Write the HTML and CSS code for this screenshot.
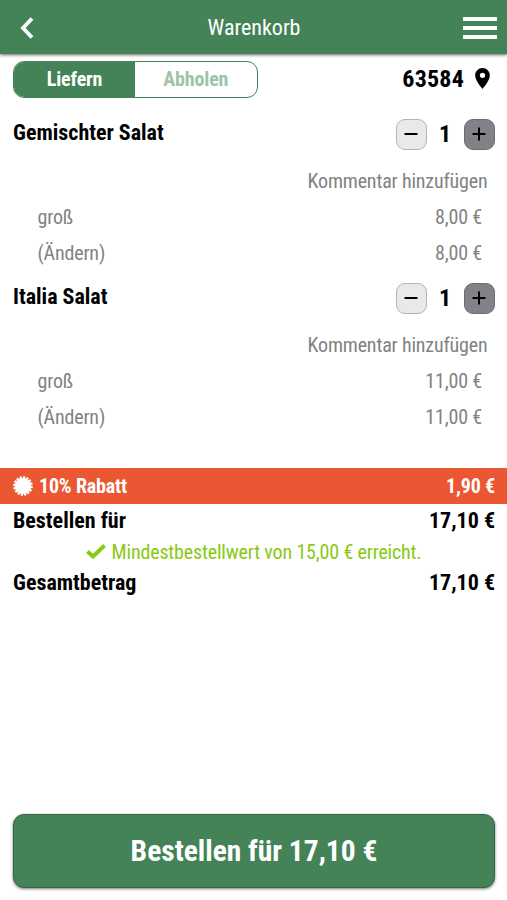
FILE: index.html
```html
<!DOCTYPE html>
<html lang="de">
<head>
	<meta charset="utf-8">
	<title>Warenkorb</title>
	<meta name="viewport" content="width=device-width, initial-scale=1">
	<link rel="stylesheet" href="styles.css">
</head>
<body>

	<header>
		<svg class="back" viewBox="0 0 14 22"><path d="M12 1.5 3 11l9 9.5"/></svg>
		<h1>Warenkorb</h1>
		<div class="menu"><i></i><i></i><i></i></div>
	</header>

	<div class="delivery">
		<div class="toggle">
			<div class="on"><span>Liefern</span></div>
			<div><span>Abholen</span></div>
		</div>
		<div class="zip">
			<span>63584</span>
			<svg class="pin" viewBox="5 2 14 20"><path d="M12 2C8.13 2 5 5.13 5 9c0 5.25 7 13 7 13s7-7.75 7-13c0-3.87-3.13-7-7-7zm0 9.5a2.5 2.5 0 1 1 0-5 2.5 2.5 0 0 1 0 5z"/></svg>
		</div>
	</div>

	<main>
		<section class="item">
			<div class="title">
				<h2>Gemischter Salat</h2>
				<div class="minus"><svg viewBox="0 0 14 14"><path d="M.5 7h13"/></svg></div>
				<div class="count">1</div>
				<div class="plus"><svg viewBox="0 0 14 14"><path d="M.5 7h13M7 .5v13"/></svg></div>
			</div>
			<div class="comment"><span>Kommentar hinzufügen</span></div>
			<div class="option"><span>groß</span><span class="price">8,00 €</span></div>
			<div class="option"><span>(Ändern)</span><span class="price">8,00 €</span></div>
		</section>

		<section class="item">
			<div class="title">
				<h2>Italia Salat</h2>
				<div class="minus"><svg viewBox="0 0 14 14"><path d="M.5 7h13"/></svg></div>
				<div class="count">1</div>
				<div class="plus"><svg viewBox="0 0 14 14"><path d="M.5 7h13M7 .5v13"/></svg></div>
			</div>
			<div class="comment"><span>Kommentar hinzufügen</span></div>
			<div class="option"><span>groß</span><span class="price">11,00 €</span></div>
			<div class="option"><span>(Ändern)</span><span class="price">11,00 €</span></div>
		</section>
	</main>

	<div class="discount">
		<svg class="badge" viewBox="-10 -10 20 20"><circle r="8.1"/><circle class="teeth" r="8.4" pathLength="32"/></svg>
		<span>10% Rabatt</span>
		<span class="price">1,90 €</span>
	</div>

	<div class="sum"><span>Bestellen für</span><span class="price">17,10 €</span></div>
	<div class="minimum">
		<svg class="check" viewBox="0 0 20 15"><path d="M1.5 7.5 7 12.5 18.5 1.5"/></svg>
		<span>Mindestbestellwert von 15,00 € erreicht.</span>
	</div>
	<div class="sum"><span>Gesamtbetrag</span><span class="price">17,10 €</span></div>

	<footer>
		<div class="order"><span>Bestellen für 17,10 €</span></div>
	</footer>

</body>
</html>
```
FILE: styles.css
```css
* { box-sizing: border-box; }

:root {
	--green: #448357;
	--orange: #eb5633;
	--lime: #88c913;
	--gray: #828282;
	--padding: 13px;
}

body {
	margin: 0;
	height: 900px;
	display: flex;
	flex-direction: column;
	overflow: hidden;
	background: #fff;
	color: #000;
	font: 20px "Roboto Condensed", Roboto, sans-serif;
	font-stretch: 75%;
	letter-spacing: -.17px;
	white-space: nowrap;
}

h1, h2 { margin: 0; }

header {
	display: grid;
	grid-template-columns: 34px 1fr 34px;
	align-items: center;
	height: 54px;
	padding: 0 10px 0 20px;
	background: var(--green);
	box-shadow: 0 1px 3px #0009;
	color: #fff;
}
header h1 { padding-right: 9px; font-size: 22px; font-weight: 400; letter-spacing: 0; text-align: center; }

.back { width: 14px; height: 22px; margin-top: 2px; fill: none; stroke: #fff; stroke-width: 3.8; }

.menu { display: grid; gap: 5px; margin-top: 2px; }
.menu i { height: 4px; background: #fff; }

.delivery {
	display: flex;
	justify-content: space-between;
	padding: 7px 17px 0 var(--padding);
}

.toggle {
	display: grid;
	grid-template-columns: 121px 1fr;
	width: 244.5px;
	height: 37px;
	overflow: hidden;
	border: 1px solid var(--green);
	border-radius: 11px;
	color: #9fc3aa;
	font-weight: 700;
	line-height: 35px;
	text-align: center;
}
.toggle .on { background: var(--green); color: #fff; }

.zip { display: flex; align-items: center; gap: 11px; padding-bottom: 2px; font-size: 24px; font-weight: 700; letter-spacing: .2px; }
.pin { width: 15px; height: 21px; }

main { padding-top: 16px; }

.item { height: 164px; color: var(--gray); }

.title { display: flex; align-items: center; height: 40px; padding: 0 12.5px 0 var(--padding); color: #000; }
.title h2 { flex: 1; padding-bottom: 4px; font-size: 22px; font-weight: 700; letter-spacing: 0; }

.minus, .plus {
	display: grid;
	place-items: center;
	width: 31px;
	height: 31px;
	border: 1px solid #b4b4b4;
	border-radius: 9px;
	background: #e9e9e9;
}
.plus { background: #808288; border-color: #6c6d72; }
.minus svg, .plus svg { width: 14px; height: 14px; stroke: #000; stroke-width: 2; }
.count { width: 37px; font-size: 24px; font-weight: 700; text-align: center; }

.comment { height: 46px; padding-right: 19.5px; line-height: 54px; text-align: right; }
.option { display: flex; justify-content: space-between; height: 35.5px; padding: 0 25px 0 37.5px; line-height: 35px; }

.discount {
	display: flex;
	align-items: center;
	height: 36px;
	margin-top: 26px;
	padding: 0 12px 0 var(--padding);
	background: var(--orange);
	color: #fff;
	font-weight: 700;
}
.discount .price { margin-left: auto; }
.badge { width: 20px; height: 20px; margin-right: 6px; fill: #fff; }
.badge .teeth { fill: none; stroke: #fff; stroke-width: 2.8; stroke-dasharray: 1.3 .7; }

.sum {
	display: flex;
	justify-content: space-between;
	height: 33px;
	padding: 0 12px 0 var(--padding);
	font-size: 22px;
	font-weight: 700;
	letter-spacing: 0;
	line-height: 33px;
}

.minimum { display: flex; align-items: center; justify-content: center; height: 29px; color: var(--lime); }
.check { width: 20px; height: 15px; margin-right: 6px; fill: none; stroke: var(--lime); stroke-width: 4; }

footer { margin-top: auto; padding: 0 12px 12px var(--padding); }

.order {
	height: 74px;
	border: 1px solid #346443;
	border-radius: 11px;
	background: var(--green);
	box-shadow: 0 1px 3px #0008;
	color: #fff;
	font-size: 29.5px;
	font-weight: 700;
	letter-spacing: 0;
	line-height: 72px;
	text-align: center;
}
```
